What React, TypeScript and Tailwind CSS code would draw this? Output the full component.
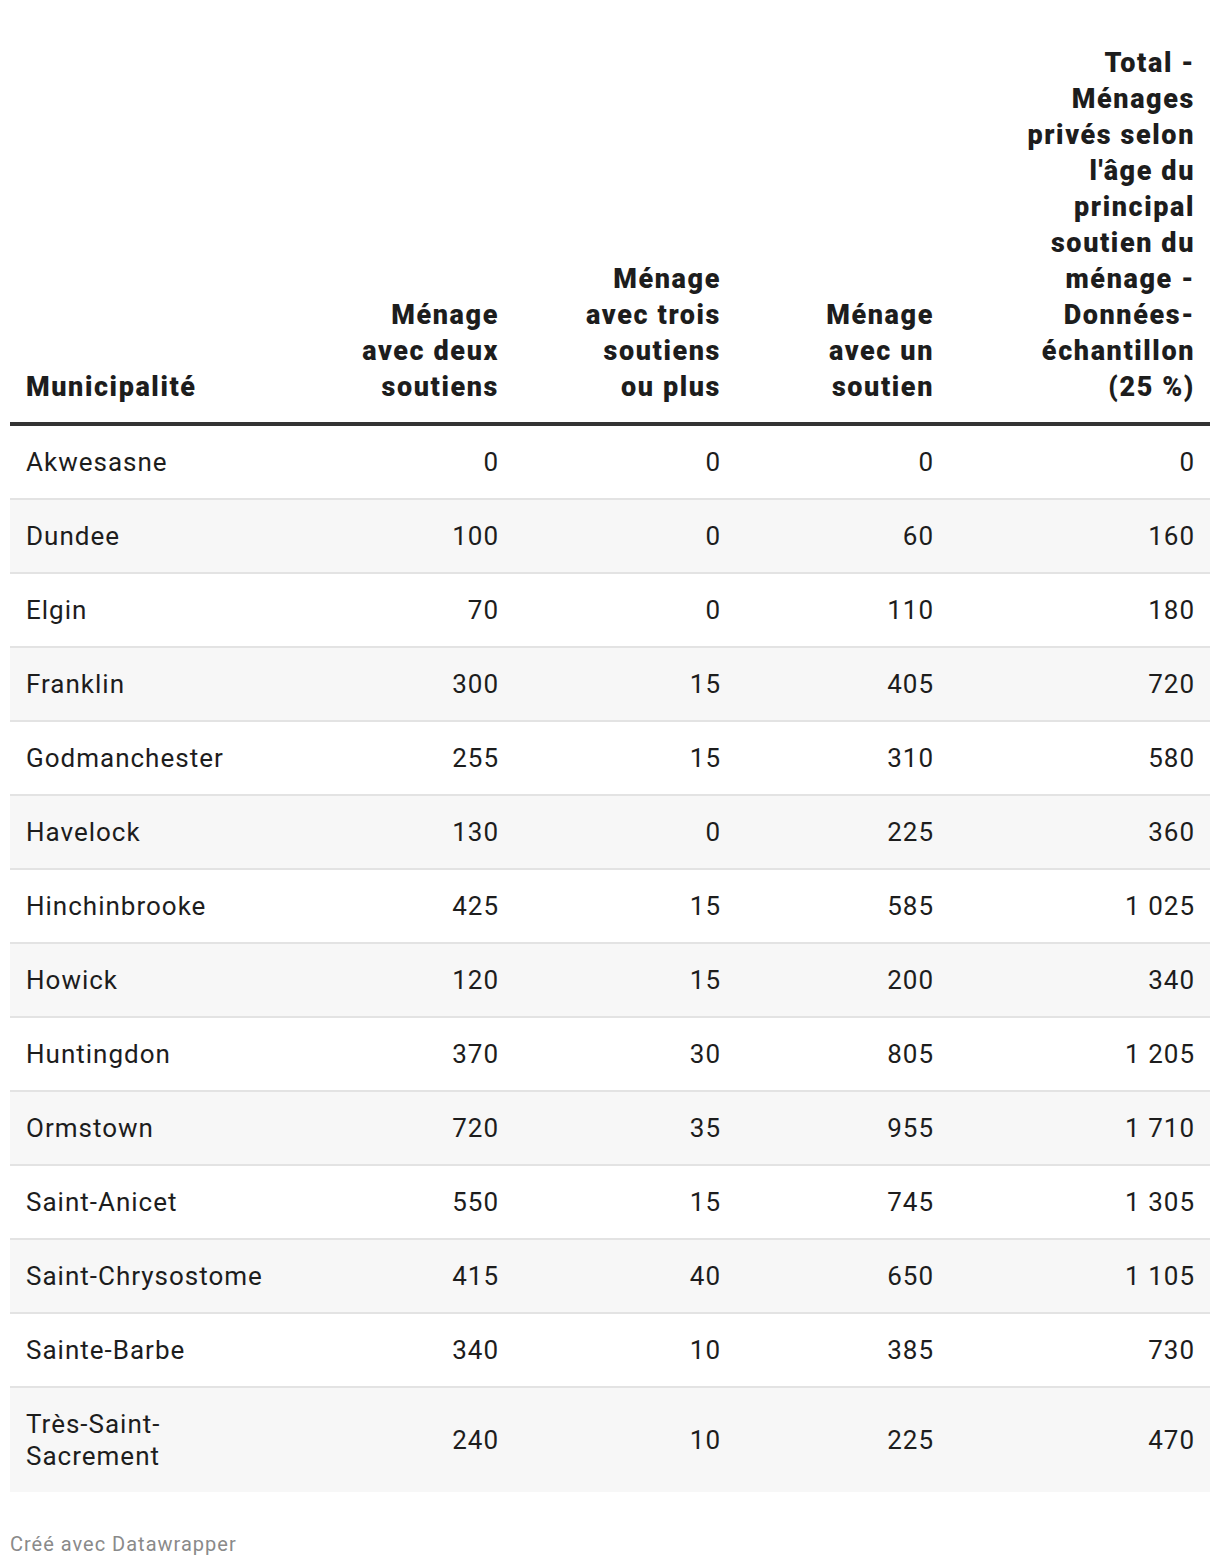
const rows: [string[], string, string, string, string][] = [
  [["Akwesasne"], "0", "0", "0", "0"],
  [["Dundee"], "100", "0", "60", "160"],
  [["Elgin"], "70", "0", "110", "180"],
  [["Franklin"], "300", "15", "405", "720"],
  [["Godmanchester"], "255", "15", "310", "580"],
  [["Havelock"], "130", "0", "225", "360"],
  [["Hinchinbrooke"], "425", "15", "585", "1 025"],
  [["Howick"], "120", "15", "200", "340"],
  [["Huntingdon"], "370", "30", "805", "1 205"],
  [["Ormstown"], "720", "35", "955", "1 710"],
  [["Saint-Anicet"], "550", "15", "745", "1 305"],
  [["Saint-Chrysostome"], "415", "40", "650", "1 105"],
  [["Sainte-Barbe"], "340", "10", "385", "730"],
  [["Très-Saint-", "Sacrement"], "240", "10", "225", "470"],
]

const headers: string[][] = [
  ["Ménage", "avec deux", "soutiens"],
  ["Ménage", "avec trois", "soutiens", "ou plus"],
  ["Ménage", "avec un", "soutien"],
  [
    "Total -",
    "Ménages",
    "privés selon",
    "l'âge du",
    "principal",
    "soutien du",
    "ménage -",
    "Données-",
    "échantillon",
    "(25 %)",
  ],
]

function Lines({ lines }: { lines: string[] }) {
  return (
    <>
      {lines.map((l, i) => (
        <span key={i} className="block whitespace-nowrap">
          {l}
        </span>
      ))}
    </>
  )
}

export default function App() {
  return (
    <div className="bg-white px-[10px] pt-[10px] pb-[12px] font-['Roboto',sans-serif] text-[#1d1d1d]">
      <table className="w-[1200px] table-fixed border-separate border-spacing-0">
        <colgroup>
          <col className="w-[280px]" />
          <col className="w-[224px]" />
          <col className="w-[222px]" />
          <col className="w-[213px]" />
          <col className="w-[261px]" />
        </colgroup>
        <thead>
          <tr>
            <th className="border-b-4 border-[#333333] pl-[16px] pr-[15px] pt-[35px] pb-[17px] text-left align-bottom text-[27px] leading-[36px] font-black tracking-[1.6px]">
              Municipalité
            </th>
            {headers.map((h, i) => (
              <th
                key={i}
                className="border-b-4 border-[#333333] pl-[16px] pr-[15px] pt-[35px] pb-[17px] text-right align-bottom text-[27px] leading-[36px] font-black tracking-[1.6px]"
              >
                <Lines lines={h} />
              </th>
            ))}
          </tr>
        </thead>
        <tbody>
          {rows.map(([name, a, b, c, d], i) => {
            const last = i === rows.length - 1
            const cell = `py-[20px] pl-[16px] pr-[15px] text-[26px] leading-[32px] tracking-[1px] align-middle ${
              last ? "" : "border-b-2 border-[#e3e3e3]"
            } ${i % 2 === 1 ? "bg-[#f7f7f7]" : "bg-white"}`
            return (
              <tr key={i}>
                <td className={`${cell} text-left`}>
                  <Lines lines={name} />
                </td>
                {[a, b, c, d].map((v, j) => (
                  <td key={j} className={`${cell} text-right whitespace-nowrap`}>
                    {v}
                  </td>
                ))}
              </tr>
            )
          })}
        </tbody>
      </table>
      <div className="mt-[40px] text-[20px] leading-[24px] tracking-[1px] text-[#8a8a8a]">Créé avec Datawrapper</div>
    </div>
  )
}
